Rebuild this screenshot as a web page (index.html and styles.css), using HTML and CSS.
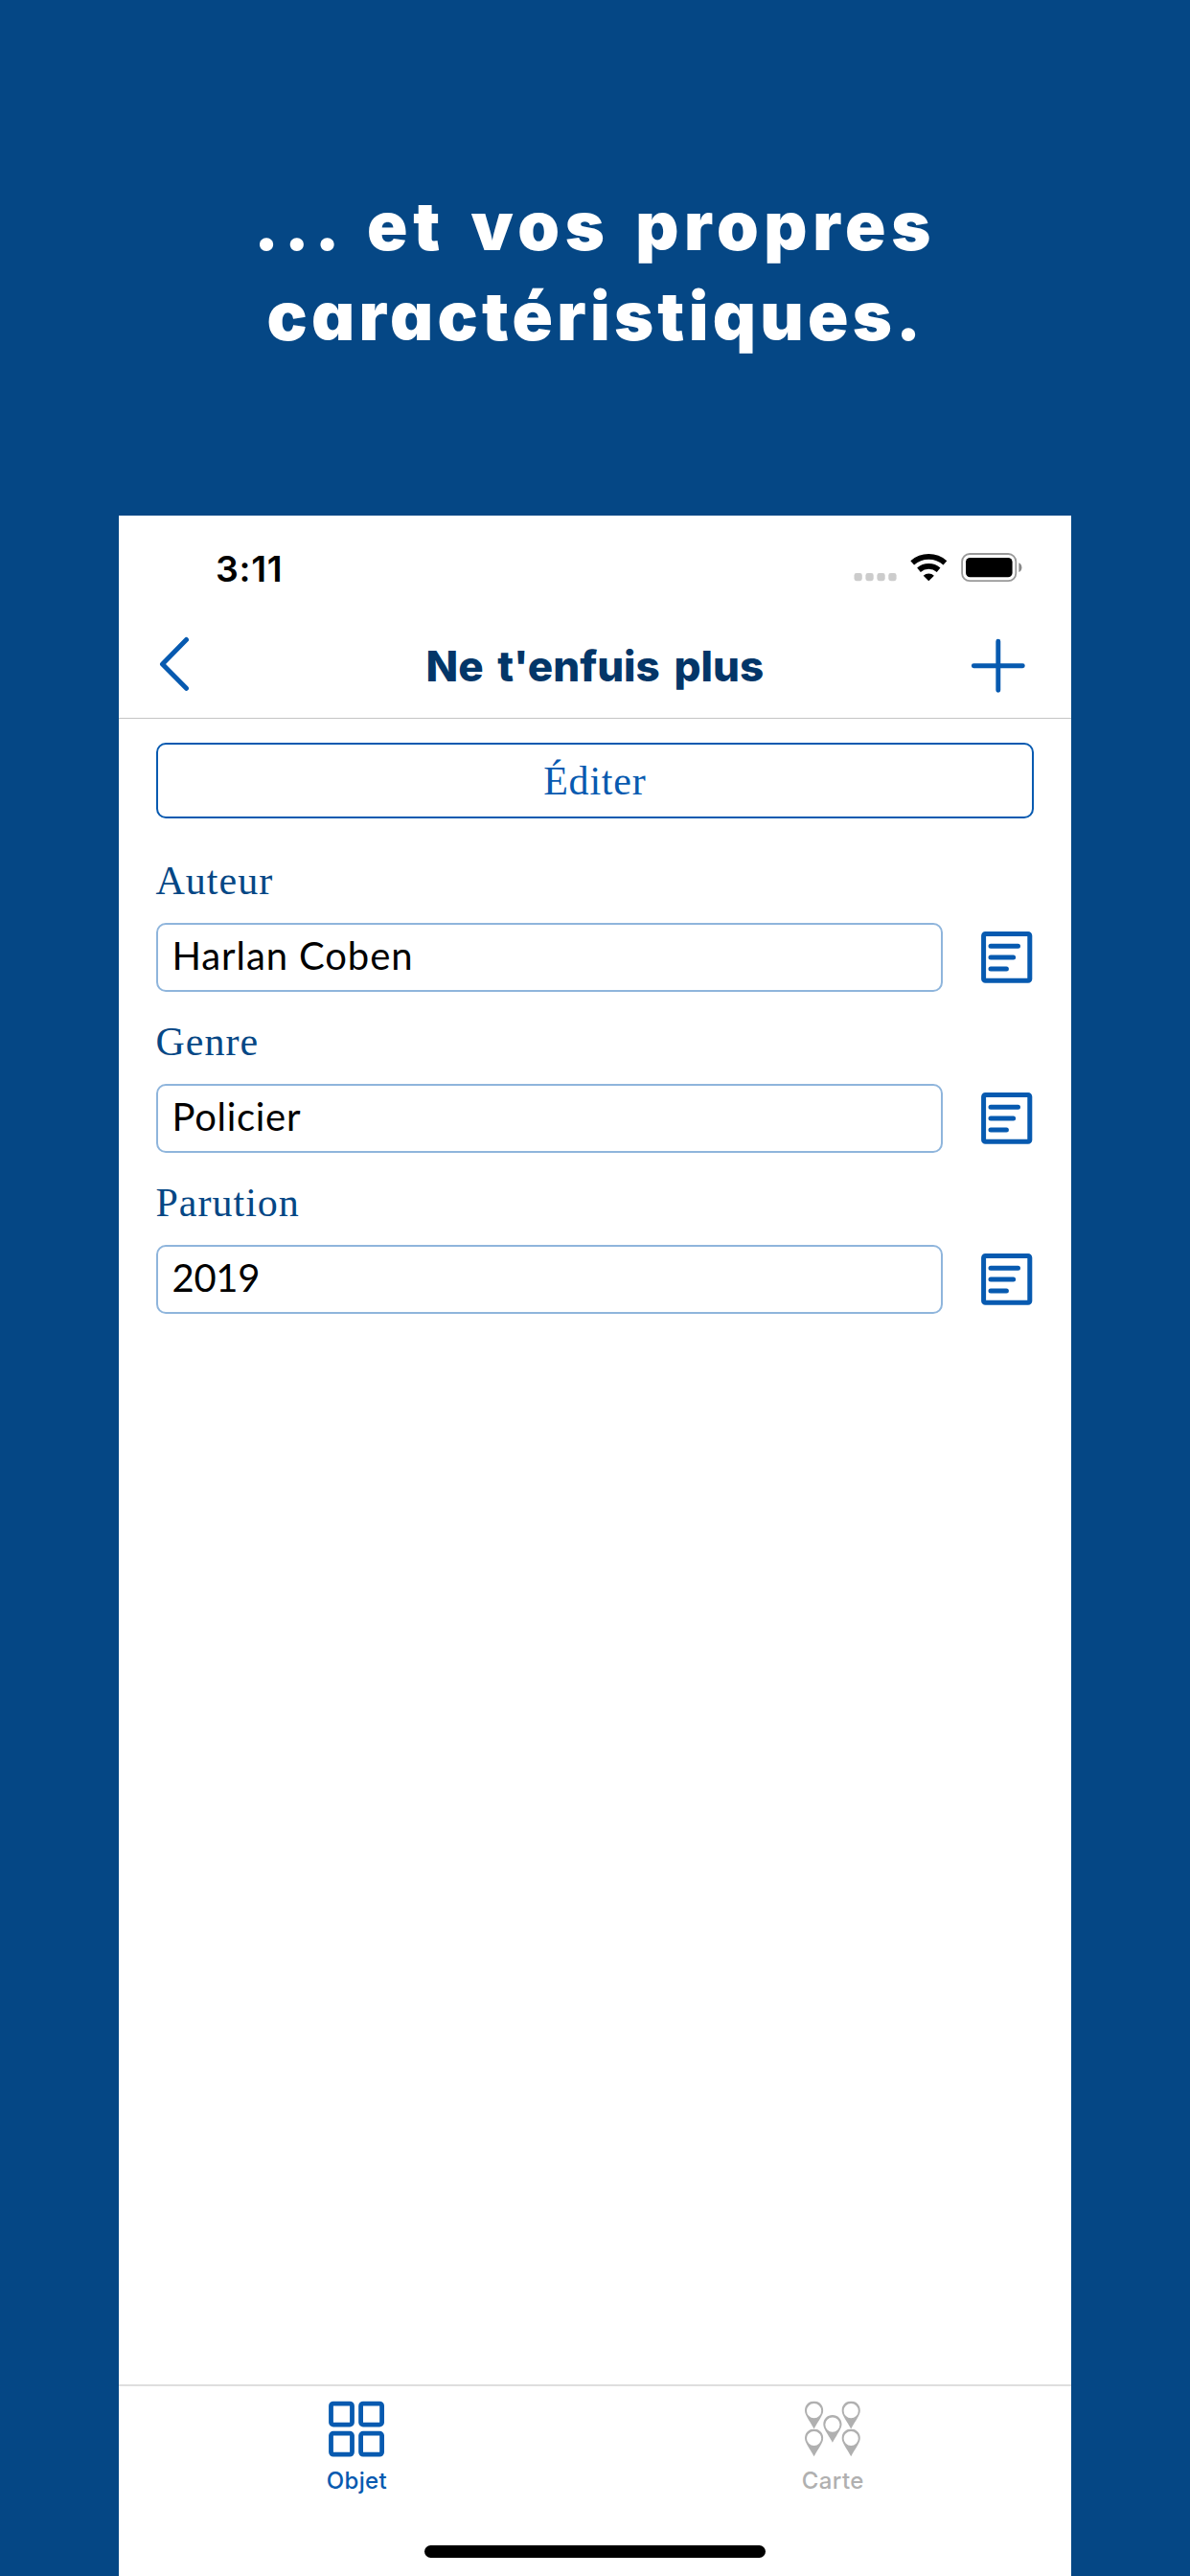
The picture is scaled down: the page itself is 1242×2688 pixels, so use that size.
FILE: index.html
```html
<!DOCTYPE html>
<html lang="fr">
<head>
<meta charset="utf-8">
<title>Ne t'enfuis plus</title>
<link rel="stylesheet" href="styles.css">
</head>
<body>
<svg class="defs" width="0" height="0" aria-hidden="true">
  <symbol id="note" viewBox="0 0 54 54">
    <rect x="2.6" y="2.6" width="48.2" height="48.6" rx="1.8" fill="none" stroke="currentColor" stroke-width="5"/>
    <path d="M10 15.2h28.500M10 27.100h23.600M10 39.100h16.400" fill="none" stroke="currentColor" stroke-width="5" stroke-linecap="round"/>
  </symbol>
  <symbol id="pin" viewBox="0 0 20 29">
    <path fill="currentColor" fill-rule="evenodd" d="M10 0C4.600 0 .4 4.200.4 9.600c0 5 4.600 10 9.600 19.200 5-9.200 9.600-14.200 9.600-19.200C19.600 4.200 15.400 0 10 0Zm0 2.500a7.600 7.600 0 1 1 0 15.200 7.600 7.600 0 0 1 0-15.200Z"/>
  </symbol>
</svg>
<header class="headline">
  <div class="headline-first">... et vos propres</div>
  <div class="headline-second">caractéristiques.</div>
</header>
<main class="phone">
  <div class="status">
    <span class="time">3:11</span>
    <svg class="signals" width="180" height="34" viewBox="0 0 180 34">
      <g fill="#ccc"><rect x="4.500" y="23" width="8.300" height="8.200" rx="2.400"/><rect x="16.400" y="23" width="8.300" height="8.200" rx="2.400"/><rect x="28.400" y="23" width="8.300" height="8.200" rx="2.400"/><rect x="40.300" y="23" width="8.300" height="8.200" rx="2.400"/></g>
      <g fill="none" stroke="#000" stroke-width="5.700"><path d="M65.200 12.300a26 26 0 0 1 34.200 0"/><path d="M72 19.700a16 16 0 0 1 20.600 0"/></g>
      <path d="M82.300 31.200 76.700 25.700a8.200 8.200 0 0 1 11.200 0Z"/>
      <rect x="117.100" y="3" width="56.200" height="28.200" rx="8" fill="none" stroke="#999" stroke-width="1.800"/>
      <rect x="121" y="7" width="48.600" height="20.200" rx="4.500"/>
      <path d="M176.400 12.300q3 1.500 3 4.900t-3 4.900Z" fill="#888"/>
    </svg>
  </div>
  <nav class="navbar">
    <svg width="32" height="60" viewBox="0 0 32 60"><path d="M28.500 4.500 3.500 29.900l25 25.400" fill="none" stroke="currentColor" stroke-width="5" stroke-linecap="round" stroke-linejoin="round"/></svg>
    <h1>Ne t'enfuis plus</h1>
    <svg width="58" height="60" viewBox="0 0 58 60"><path d="M29.800 6.200v51M4.300 31.700h51" fill="none" stroke="currentColor" stroke-width="4.900" stroke-linecap="round"/></svg>
  </nav>
  <section class="content">
    <button class="edit"><span>Éditer</span></button>
    <div class="field"><label class="label-auteur">Auteur</label><div class="row"><div class="value"><span class="v-auteur">Harlan Coben</span></div><svg width="54" height="54"><use href="#note"/></svg></div></div>
    <div class="field"><label class="label-genre">Genre</label><div class="row"><div class="value"><span class="v-genre">Policier</span></div><svg width="54" height="54"><use href="#note"/></svg></div></div>
    <div class="field"><label class="label-parution">Parution</label><div class="row"><div class="value"><span class="v-parution">2019</span></div><svg width="54" height="54"><use href="#note"/></svg></div></div>
  </section>
  <footer>
    <div class="tabs">
      <div class="tab active">
        <svg width="60" height="60" viewBox="0 0 60 60"><g fill="none" stroke="currentColor" stroke-width="4.800"><rect x="3.500" y="3.100" width="22" height="22" rx="2.400"/><rect x="34.600" y="3.100" width="22" height="22" rx="2.400"/><rect x="3.500" y="34.200" width="22" height="22" rx="2.400"/><rect x="34.600" y="34.200" width="22" height="22" rx="2.400"/></g></svg>
        <span class="t-objet">Objet</span>
      </div>
      <div class="tab">
        <svg width="60" height="60" viewBox="0 0 60 60"><use href="#pin" x="0.600" y=".6" width="20" height="29"/><use href="#pin" x="39.200" y=".6" width="20" height="29"/><use href="#pin" x="19.900" y="15" width="20" height="29"/><use href="#pin" x="0.600" y="29.400" width="20" height="29"/><use href="#pin" x="39.200" y="29.400" width="20" height="29"/></svg>
        <span class="t-carte">Carte</span>
      </div>
    </div>
    <div class="home"></div>
  </footer>
</main>
</body>
</html>
```
FILE: styles.css
```css
* { box-sizing: border-box; }
body { margin: 0; height: 2688px; background: #054785; display: flex; flex-direction: column; overflow: hidden; }
.defs { display: none; }
svg { display: block; flex: none; }
.headline { height: 538px; padding-top: 189px; color: #fff; text-align: center; font: 900 70px/94px Inter, sans-serif; font-feature-settings: "cv11" 1; white-space: nowrap; }
.headline-first { letter-spacing: 5.700px; word-spacing: 7px; }
.headline-second { letter-spacing: 4.300px; padding-left: 2px; }
.phone { width: 993.700px; height: 2150px; margin-left: 124px; background: #fff; display: flex; flex-direction: column; color: #075ab0; }
.status { height: 112px; padding: 37px 51px 0 101px; display: flex; justify-content: space-between; color: #000; }
.time { font: 600 37.500px/37px Inter, sans-serif; letter-spacing: .7px; }
.navbar { height: 100px; border-bottom: 1px solid #c4c4c4; padding: 13px 48px 0 42px; display: grid; grid-template-columns: 64px 1fr 58px; }
h1 { margin: 0; color: #033668; font: 800 44px/64px Inter, sans-serif; word-spacing: 5px; text-align: center; white-space: nowrap; }
.content { flex: 1; padding: 25px 38.500px 0 38.500px; }
.edit { width: 100%; height: 79px; display: block; border: 2px solid #075ab0; border-radius: 10px; background: #fff; color: inherit; padding: 0; font: 42px/76px "Liberation Serif", serif; letter-spacing: .8px; }
.field { height: 168px; padding-top: 41px; }
.field label { display: block; height: 68px; color: #054785; font: 42px/48px "Liberation Serif", serif; letter-spacing: 1px; }
.row { display: flex; align-items: center; justify-content: space-between; padding-right: 1px; }
.value { width: 821px; height: 72px; border: 2px solid #8fb5dc; border-radius: 10px; padding-left: 15px; color: #000; font: 40px/64px Lato, sans-serif; letter-spacing: .7px; }
.v-auteur { letter-spacing: .9px; }
.v-parution { letter-spacing: -.3px; }
footer { height: 200px; border-top: 2px solid #dedede; }
.tabs { display: grid; grid-template-columns: 1fr 1fr; height: 166px; }
.tab { display: flex; flex-direction: column; align-items: center; padding-top: 15px; font: 500 24px/32px Inter, sans-serif; color: #b0b0b0; }
.tab span { margin-top: 8px; letter-spacing: .4px; }
.tab.active { color: #075ab0; }
.home { width: 356px; height: 13px; border-radius: 7px; background: #000; margin: 0 auto; }
```
